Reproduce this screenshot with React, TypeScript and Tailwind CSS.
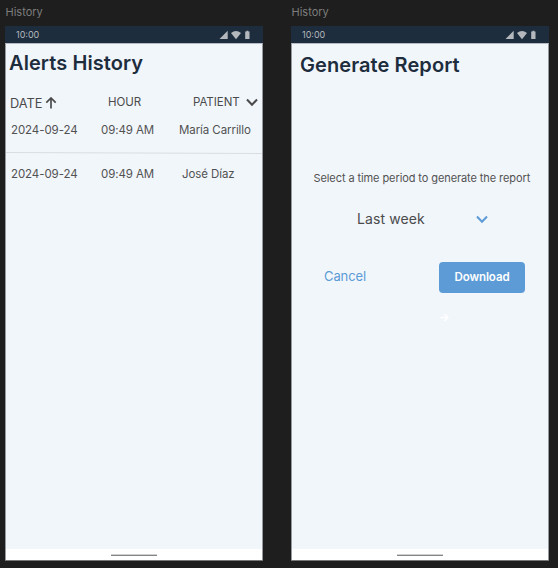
import type { ReactNode } from 'react';

function StatusBar() {
  return (
    <div className="flex h-[17px] items-center bg-[#1e2d3d] pl-[11px] pr-[12px] text-[#b4b8bd]">
      <span className="mt-px text-[9px] leading-[16px]">10:00</span>
      <svg className="ml-auto" width="32" height="10" viewBox="0 0 32 10" fill="currentColor">
        <path d="M0.5 9 L8.7 0.8 V9 Z" />
        <path d="M12 3 Q17 -1.2 22 3 L17 9.2 Z" />
        <path d="M26.2 1.6 H27.5 V0.7 H29.3 V1.6 H30.5 V9 H26.2 Z" />
      </svg>
    </div>
  );
}

function Phone({ children }: { children: ReactNode }) {
  return (
    <section className="w-[258px]">
      <h2 className="h-[26px] pl-[0.5px] pt-[4px] text-[11px] leading-[16px] text-[#7d7d7d]">History</h2>
      <div className="flex h-[535px] flex-col border-b border-[#777777] bg-[#f1f6fb]">
        <StatusBar />
        <div className="flex flex-1 flex-col border-x border-t border-x-[#96999d] border-t-[#b5bac3]">
          {children}
          <div className="mt-auto flex h-[11px] justify-center bg-white pt-[5px]">
            <div className="h-[2px] w-[46px] border-t border-[#d0d0d0] bg-[#858585]" />
          </div>
        </div>
      </div>
    </section>
  );
}

function Chevron({ className }: { className: string }) {
  return (
    <svg className={className} width="12" height="9" viewBox="0 0 12 9" fill="none" stroke="currentColor" strokeWidth="2">
      <path d="M1 1.5 L6 6.8 L11 1.5" />
    </svg>
  );
}

function AlertRow({ name, inset }: { name: string; inset: string }) {
  return (
    <div className="grid grid-cols-[90px_77px_1fr] pl-[5px] text-[11.5px] leading-[16px] tracking-[-0.08px] text-[#525252]">
      <span>2024-09-24</span>
      <span>09:49 AM</span>
      <span className={inset}>{name}</span>
    </div>
  );
}

export default function App() {
  return (
    <main className="flex h-[568px] w-[558px] gap-[28px] overflow-hidden whitespace-nowrap bg-[#1e1e1e] pl-[5px] font-['Inter',sans-serif]">
      <Phone>
        <h1 className="mt-[7px] pl-[3px] text-[20px] font-semibold leading-[25px] tracking-[0.08px] text-[#1e2d3d]">Alerts History</h1>
        <div className="mt-[17px] flex h-[20px] text-[11.5px] leading-[18px] text-[#4b4b4b]">
          <span className="ml-[4px] w-[34px] pt-[2px] text-[12.8px]">DATE</span>
          <svg className="ml-px mt-[4px]" width="12" height="13" viewBox="0 0 12 13" fill="none" stroke="currentColor" strokeWidth="1.7">
            <path d="M6 11.5 V1 M1.3 5.7 L6 1 L10.7 5.7" />
          </svg>
          <span className="ml-[51px] w-[85px] tracking-[-0.05px]">HOUR</span>
          <span className="w-[52px] tracking-[-0.05px]">PATIENT</span>
          <Chevron className="ml-[0.5px] mt-[5px]" />
        </div>
        <div className="mt-[9px]">
          <AlertRow name="María Carrillo" inset="pl-px" />
          <svg className="mt-[14px] block" width="256" height="2" viewBox="0 0 256 2">
            <path d="M0 .5 L256 1.5" stroke="#d9dde1" />
          </svg>
          <div className="mt-[12px]">
            <AlertRow name="José Díaz" inset="pl-[4px]" />
          </div>
        </div>
      </Phone>
      <Phone>
        <h1 className="mt-[9px] pl-[8px] text-[20px] font-semibold leading-[25px] tracking-[0.08px] text-[#1e2d3d]">Generate Report</h1>
        <p className="mt-[92px] pl-[21.5px] text-[11px] leading-[16px] tracking-[-0.09px] text-[#525252]">Select a time period to generate the report</p>
        <div className="mt-[23px] flex pl-[65px] text-[14px] leading-[20px] tracking-[0.1px] text-[#4b4b4b]">
          <span className="w-[119px]">Last week</span>
          <Chevron className="mt-[6px] text-[#5c9bd6]" />
        </div>
        <div className="mt-[33px] flex h-[31px]">
          <button className="ml-[32px] w-[44px] pb-[3px] text-left text-[13px] leading-[16px] tracking-[-0.1px] text-[#5c9bd6]">Cancel</button>
          <button className="ml-[71px] w-[86px] rounded-[4px] bg-[#5c9bd6] pb-px text-[11.5px] font-semibold leading-[16px] tracking-[-0.1px] text-white">Download</button>
        </div>
        <svg className="ml-[148px] mt-[20px]" width="9" height="9" viewBox="0 0 9 9" fill="none" stroke="white" strokeWidth="1.3">
          <path d="M.5 4.5 H8 M4.5 1 L8 4.5 L4.5 8" />
        </svg>
      </Phone>
    </main>
  );
}
